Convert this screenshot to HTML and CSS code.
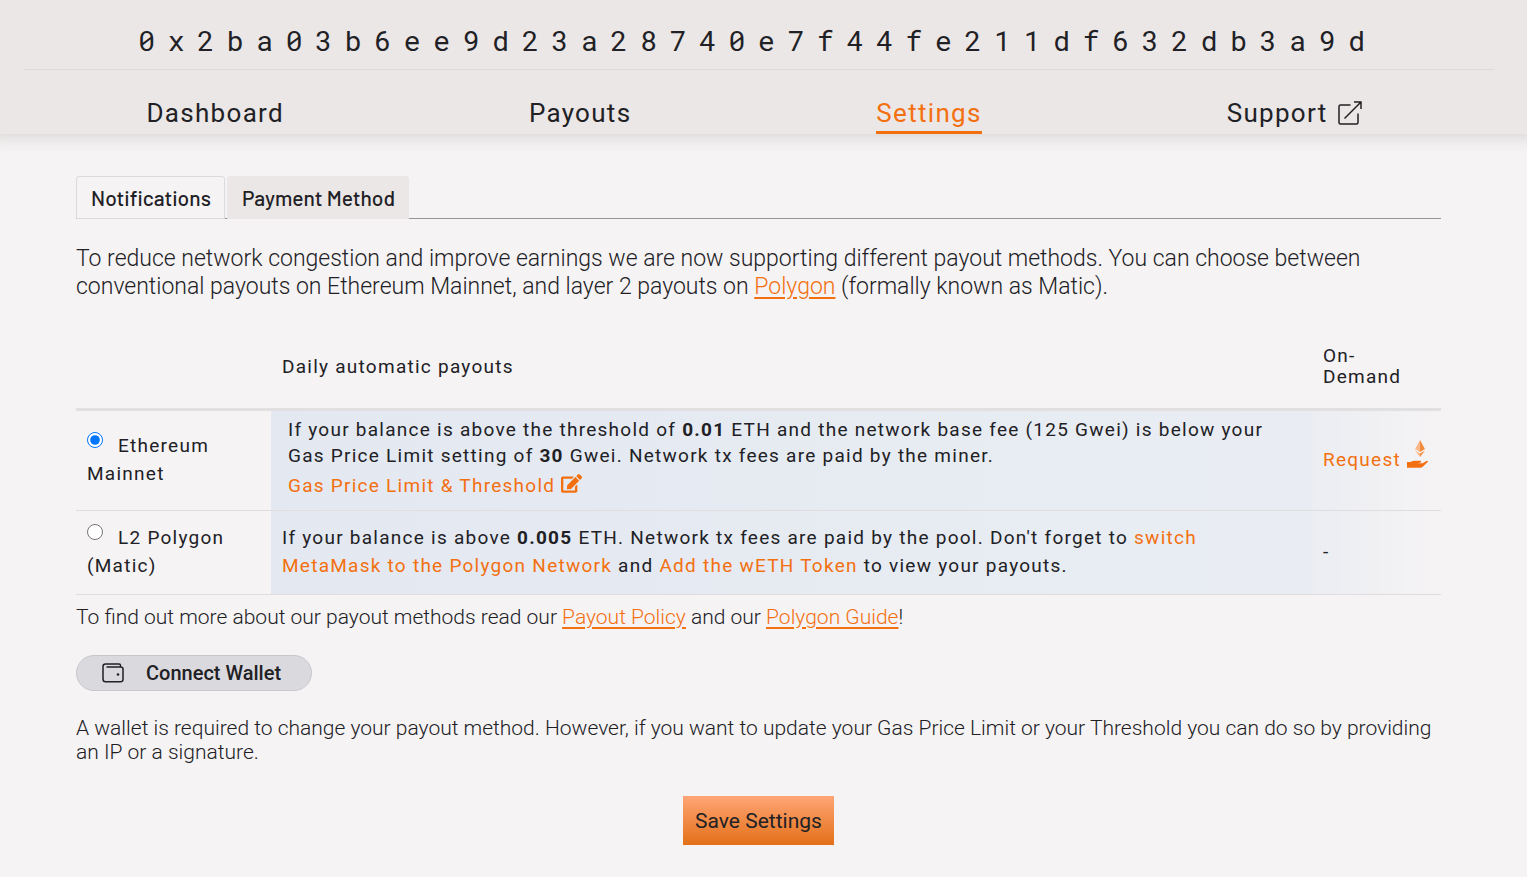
FILE: index.html
```html
<!DOCTYPE html>
<html lang="en">
<head>
<meta charset="utf-8">
<meta name="viewport" content="width=device-width, initial-scale=1">
<title>Settings</title>
<link rel="stylesheet" href="styles.css">
</head>
<body>
<header class="header">
  <h1 class="address">0x2ba03b6ee9d23a28740e7f44fe211df632db3a9d</h1>
  <nav class="nav">
    <a class="nav-link" href="#">Dashboard</a>
    <a class="nav-link" href="#">Payouts</a>
    <a class="nav-link active" href="#">Settings</a>
    <a class="nav-link" href="#">Support
      <svg class="external" viewBox="0 0 24 24" aria-hidden="true"><path d="M12.500 4H2.500Q1 4 1 5.500V21.500Q1 23 2.500 23H18.500Q20 23 20 21.500V12.500M6.500 17.500L23 1M16 1H23V8"/></svg>
    </a>
  </nav>
</header>
<main class="main">
  <div class="tabs" role="tablist">
    <button class="tab" type="button" role="tab">Notifications</button>
    <button class="tab selected" type="button" role="tab" aria-selected="true">Payment Method</button>
  </div>
  <p class="intro">To reduce network congestion and improve earnings we are now supporting different payout methods. You can choose between conventional payouts on Ethereum Mainnet, and layer 2 payouts on <a href="#">Polygon</a> (formally known as Matic).</p>
  <table class="methods">
    <thead>
      <tr><th class="col-name"></th><th>Daily automatic payouts</th><th class="col-demand">On-Demand</th></tr>
    </thead>
    <tbody>
      <tr>
        <td><input class="radio" type="radio" name="method" id="eth" checked><label for="eth">Ethereum Mainnet</label></td>
        <td class="tint tall">
          <p class="detail">If your balance is above the threshold of <b>0.01</b> ETH and the network base fee (125 Gwei) is below your Gas Price Limit setting of <b>30</b> Gwei. Network tx fees are paid by the miner.</p>
          <button class="link-button" type="button">Gas Price Limit &amp; Threshold
            <svg class="edit" viewBox="0 0 576 512" aria-hidden="true"><path d="M402.600 83.200l90.200 90.200c3.800 3.800 3.800 10 0 13.800L274.400 405.600l-92.800 10.300c-12.400 1.400-22.900-9.100-21.500-21.500l10.300-92.800L388.800 83.200c3.800-3.800 10-3.800 13.800 0zm162-22.900l-48.800-48.800c-15.200-15.200-39.900-15.200-55.200 0l-35.400 35.400c-3.800 3.800-3.800 10 0 13.800l90.200 90.200c3.800 3.800 10 3.800 13.800 0l35.400-35.400c15.200-15.300 15.200-40 0-55.200zM384 346.200V448H64V128h229.800c3.200 0 6.200-1.300 8.500-3.500l40-40c7.600-7.600 2.200-20.500-8.500-20.500H48C21.500 64 0 85.500 0 112v352c0 26.500 21.500 48 48 48h352c26.500 0 48-21.500 48-48V306.200c0-10.700-12.900-16-20.500-8.500l-40 40c-2.200 2.300-3.500 5.300-3.500 8.500z"/></svg>
          </button>
        </td>
        <td class="fade">
          <button class="link-button request" type="button">Request
            <svg class="hand" viewBox="0 0 22 28" aria-hidden="true">
              <path fill="#f9b98a" d="M13 0L8 9L13 12Z"/><path fill="#f28a3c" d="M13 0L18 9L13 12Z"/>
              <path fill="#f9b98a" d="M8 10.500L13 13.500V17Z"/><path fill="#f28a3c" d="M18 10.500L13 13.500V17Z"/>
              <path fill="#f37010" d="M0 22H3.500Q5.500 20.800 8 20.800H13.500Q14.800 21.200 14 22.600L10.500 23.200H15.500L19.500 21Q21.200 20.600 21 21.800L15.500 27Q14.500 27.700 13 27.700H0Z"/>
            </svg>
          </button>
        </td>
      </tr>
      <tr>
        <td><input class="radio" type="radio" name="method" id="matic"><label for="matic">L2 Polygon (Matic)</label></td>
        <td class="tint">If your balance is above <b>0.005</b> ETH. Network tx fees are paid by the pool. Don't forget to <a class="plain" href="#">switch MetaMask to the Polygon Network</a> and <a class="plain" href="#">Add the wETH Token</a> to view your payouts.</td>
        <td class="fade">-</td>
      </tr>
    </tbody>
  </table>
  <p class="note">To find out more about our payout methods read our <a href="#">Payout Policy</a> and our <a href="#">Polygon Guide</a>!</p>
  <button class="wallet" type="button">
    <svg class="wallet-icon" viewBox="0 0 22 20" aria-hidden="true"><path d="M18.500 4V2.500Q18.500 1 17 1H3.500Q1 1 1 3.500V16Q1 18.800 3.500 18.800H18.500Q21 18.800 21 16.500V6Q21 4 18.500 4H4.500"/><circle cx="16" cy="11.500" r="1.300"/></svg>
    Connect Wallet
  </button>
  <p class="note">A wallet is required to change your payout method. However, if you want to update your Gas Price Limit or your Threshold you can do so by providing an IP or a signature.</p>
  <button class="save" type="button">Save Settings</button>
</main>
</body>
</html>
```
FILE: styles.css
```css
* { box-sizing: border-box; }
body {
  margin: 0;
  background: #f5f3f4;
  color: #212125;
  font-family: Roboto, sans-serif;
}
p { margin: 0; }
a { color: #f37010; text-underline-offset: 3px; }
button { font-family: inherit; color: inherit; cursor: pointer; }

.header {
  padding: 22px 33px 0 24px;
  background: #ebe7e6;
  box-shadow: 0 -8px 16px 10px #d4d2cf;
}
.address {
  margin: 0;
  padding: 0 2px 9px 0;
  border-bottom: 1px solid #dcdadb;
  font: 400 28px/38px "Roboto Mono", "Liberation Mono", monospace;
  letter-spacing: 0.454em;
  text-align: center;
}
.nav {
  display: flex;
  justify-content: space-around;
  padding: 25px 10px 0 0;
}
.nav-link {
  display: flex;
  align-items: center;
  gap: 10px;
  height: 39px;
  padding-bottom: 1px;
  border-bottom: 3px solid transparent;
  color: inherit;
  font-size: 26px;
  letter-spacing: 0.05em;
  text-decoration: none;
}
.nav-link.active { color: #f37010; border-color: #f37010; }
.external { width: 24px; height: 24px; fill: none; stroke: currentColor; stroke-width: 1.500; }

.main { padding: 42px 86px 32px 76px; }
.tabs {
  display: flex;
  gap: 2px;
  border-bottom: 1px solid #97959a;
}
.tab {
  height: 43px;
  margin-bottom: -1px;
  padding: 0 13px 0 14px;
  border: 1px solid #dadade;
  border-radius: 3px 3px 0 0;
  background: #f5f3f4;
  font-family: Barlow, Roboto, sans-serif;
  font-size: 21px;
  font-weight: 500;
}
.tab.selected { background: #ebe7e6; border-color: #ebe7e6; }

.intro {
  margin: 26px 0 23px;
  font-size: 23px;
  font-weight: 300;
  line-height: 28px;
}

.methods {
  width: 100%;
  border-collapse: collapse;
  font-size: 19px;
  letter-spacing: 0.066em;
  line-height: 28px;
}
.methods th {
  padding: 21px 11px;
  border-bottom: 3px solid #e2dfe0;
  font-weight: 400;
  line-height: 21px;
  text-align: left;
}
.methods td {
  padding: 13px 11px 14px;
  border-bottom: 1px solid #e0dddf;
}
.col-name { width: 195px; }
.col-demand { width: 129px; }
.radio { width: 16px; height: 16px; margin: 0 15px 0 0; vertical-align: 4px; }
.tint { background: linear-gradient(90deg, #e3e8f1, #e9edf3); }
.fade { background: linear-gradient(90deg, #ebedf2, #f5f3f4); }
.methods .tint { padding-right: 17px; }
.methods .tall { padding: 6px 17px 9px; }
.detail { line-height: 26px; }
.link-button {
  display: flex;
  align-items: center;
  gap: 6px;
  height: 32px;
  padding: 0;
  border: 0;
  background: none;
  color: #f37010;
  font-size: 19px;
  letter-spacing: 0.066em;
}
.edit { width: 21px; height: 19px; margin-bottom: 4px; fill: currentColor; }
.request { margin-bottom: 2px; }
.hand { width: 22px; height: 28px; margin-bottom: 10px; }
.plain { text-decoration: none; }

.note { margin-top: 10px; font-size: 21px; font-weight: 300; line-height: 24px; }
.wallet {
  display: flex;
  align-items: center;
  gap: 22px;
  height: 36px;
  margin: 26px 0 25px;
  padding: 0 30px 0 25px;
  border: 1px solid #c8c7cc;
  border-radius: 18px;
  background: #dadade;
  font-size: 20px;
  font-weight: 500;
}
.wallet-icon { width: 22px; height: 20px; fill: none; stroke: currentColor; stroke-width: 1.500; }
.wallet-icon circle { fill: currentColor; stroke: none; }
.save {
  display: block;
  height: 49px;
  margin: 32px auto 0;
  padding: 0 12px;
  border: 0;
  background: linear-gradient(#ffa575, #e37018);
  font-size: 21px;
}
```
